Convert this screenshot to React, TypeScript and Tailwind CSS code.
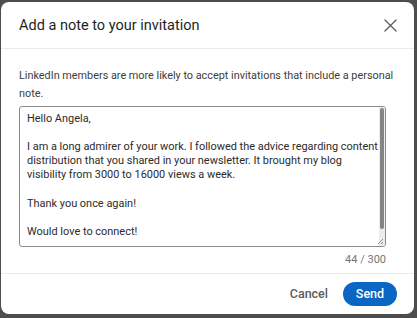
import React from "react";

export default function App() {
  const font = { fontFamily: "Roboto, Inter, 'Noto Sans', 'Liberation Sans', sans-serif" };
  return (
    <div className="w-[417px] h-[318px] bg-[#4d4d4d] overflow-hidden flex" style={font}>
      <div className="ml-[1px] mt-[2px] w-[413px] h-[312px] bg-white rounded-[8px] flex flex-col shrink-0">
        {/* Header */}
        <div className="h-[47px] flex items-center justify-between pl-[18px] pr-[16px] border-b border-[#ebebeb]">
          <h2 className="text-[14.5px] leading-[20px] text-[#1f1f1f] font-normal mt-[2px]">
            Add a note to your invitation
          </h2>
          <button className="w-[16px] h-[16px] flex items-center justify-center text-[#5e5e5e]">
            <svg width="13" height="13" viewBox="0 0 14 14" fill="none">
              <path d="M1 1 L13 13 M13 1 L1 13" stroke="currentColor" strokeWidth="1.4" strokeLinecap="round" />
            </svg>
          </button>
        </div>
        {/* Body */}
        <div className="flex-1 pl-[18px] pr-[4px] pt-[18px] flex flex-col">
          <p className="text-[10.85px] leading-[18px] text-[#3d3d3d] whitespace-nowrap">
            LinkedIn members are more likely to accept invitations that include a personal
            <br />
            note.
          </p>
          <div className="relative mt-[3px] w-[367px] h-[141px] border border-[#8c8c8c] rounded-[3px] overflow-hidden">
            <div className="pl-[7px] pt-[5px] text-[10.95px] leading-[14.1px] text-[#2b2b2b] whitespace-nowrap">
              <div>Hello Angela,</div>
              <div>&nbsp;</div>
              <div>I am a long admirer of your work. I followed the advice regarding content</div>
              <div>distribution that you shared in your newsletter. It brought my blog</div>
              <div>visibility from 3000 to 16000 views a week.</div>
              <div>&nbsp;</div>
              <div>Thank you once again!</div>
              <div>&nbsp;</div>
              <div>Would love to connect!</div>
            </div>
            <div className="absolute right-0 top-0 bottom-0 w-[6px] bg-[#ececec]" />
            <div className="absolute right-[1px] top-[1px] w-[4px] h-[121px] rounded-full bg-[#858585]" />
            <svg className="absolute right-[1px] bottom-[1px]" width="7" height="7" viewBox="0 0 7 7">
              <path d="M6 1 L1 6 M6 4 L4 6" stroke="#8a8a8a" strokeWidth="1" />
            </svg>
          </div>
          <div className="w-[367px] text-right text-[11px] leading-[18px] mt-[4px] text-[#767676]">44 / 300</div>
        </div>
        {/* Footer */}
        <div className="h-[41px] border-t border-[#ebebeb] flex items-center justify-end gap-[15px] pr-[17px]">
          <button className="text-[12.5px] font-medium text-[#5c5c5c] leading-[16px]">Cancel</button>
          <button className="w-[54px] h-[24px] rounded-full bg-[#0a66c2] text-white text-[12.5px] font-medium leading-[16px] flex items-center justify-center">
            Send
          </button>
        </div>
      </div>
    </div>
  );
}
